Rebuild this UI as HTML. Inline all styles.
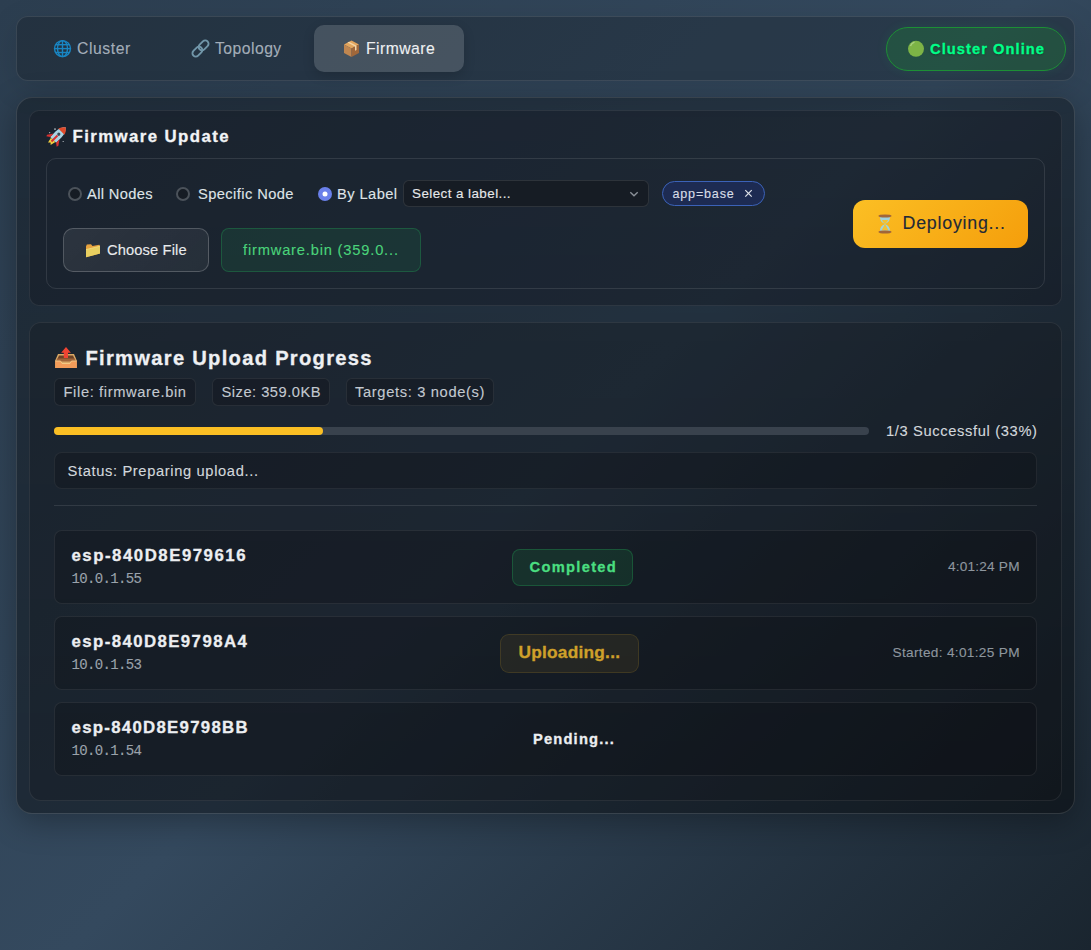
<!DOCTYPE html>
<html><head><meta charset="utf-8"><title>Firmware</title>
<style>
html,body{margin:0;padding:0;}
body{width:1091px;height:950px;position:relative;overflow:hidden;background:linear-gradient(135deg,#2c3e50 0%,#34495e 50%,#1a252f 100%);font-family:"Liberation Sans",sans-serif;}
.t{position:absolute;white-space:pre;}
</style></head><body>
<div style="position:absolute;left:16px;top:16px;width:1059px;height:65px;box-sizing:border-box;border-radius:12px;background:rgba(0,0,0,0.2);border:1px solid rgba(255,255,255,0.1);box-shadow:0 8px 32px rgba(0,0,0,0.1)"></div>
<div style="position:absolute;left:314px;top:25px;width:150px;height:47px;box-sizing:border-box;border-radius:10px;background:rgba(255,255,255,0.15);box-shadow:0 4px 12px rgba(0,0,0,0.15)"></div>
<div style="position:absolute;left:886px;top:27px;width:180px;height:44px;box-sizing:border-box;border-radius:22px;background:rgba(20,180,40,0.2);border:1px solid #1d8f35;box-shadow:0 0 12px rgba(0,255,120,0.08)"></div>
<div style="position:absolute;left:16px;top:97px;width:1059px;height:717px;box-sizing:border-box;border-radius:16px;background:linear-gradient(180deg,rgba(0,0,0,0.3),rgba(0,0,0,0.4));border:1px solid rgba(255,255,255,0.12);box-shadow:0 8px 32px rgba(0,0,0,0.3)"></div>
<div style="position:absolute;left:29px;top:110px;width:1033px;height:196px;box-sizing:border-box;border-radius:10px;background:rgba(15,15,20,0.28);border:1px solid rgba(255,255,255,0.08)"></div>
<div style="position:absolute;left:46px;top:158px;width:999px;height:131px;box-sizing:border-box;border-radius:10px;background:transparent;border:1px solid rgba(255,255,255,0.1)"></div>
<div style="position:absolute;left:403px;top:180px;width:246px;height:27px;box-sizing:border-box;border-radius:6px;background:#161c24;border:1px solid rgba(255,255,255,0.1)"></div>
<div style="position:absolute;left:662px;top:181px;width:103px;height:25px;box-sizing:border-box;border-radius:13px;background:#1d2b52;border:1px solid #3b62b8"></div>
<div style="position:absolute;left:63px;top:228px;width:146px;height:44px;box-sizing:border-box;border-radius:10px;background:linear-gradient(135deg,rgba(255,255,255,0.08),rgba(255,255,255,0.05));border:1px solid rgba(255,255,255,0.2)"></div>
<div style="position:absolute;left:221px;top:228px;width:200px;height:44px;box-sizing:border-box;border-radius:8px;background:rgba(34,197,94,0.1);border:1px solid rgba(34,197,94,0.25)"></div>
<div style="position:absolute;left:853px;top:200px;width:175px;height:48px;box-sizing:border-box;border-radius:12px;background:linear-gradient(135deg,#fbbf24 0%,#f59e0b 100%)"></div>
<div style="position:absolute;left:29px;top:322px;width:1033px;height:479px;box-sizing:border-box;border-radius:12px;background:rgba(15,15,20,0.25);border:1px solid rgba(255,255,255,0.08)"></div>
<div style="position:absolute;left:54px;top:378px;width:142px;height:28px;box-sizing:border-box;border-radius:6px;background:rgba(8,8,10,0.25);border:1px solid rgba(255,255,255,0.08)"></div>
<div style="position:absolute;left:212px;top:378px;width:118px;height:28px;box-sizing:border-box;border-radius:6px;background:rgba(8,8,10,0.25);border:1px solid rgba(255,255,255,0.08)"></div>
<div style="position:absolute;left:346px;top:378px;width:148px;height:28px;box-sizing:border-box;border-radius:6px;background:rgba(8,8,10,0.25);border:1px solid rgba(255,255,255,0.08)"></div>
<div style="position:absolute;left:54px;top:427px;width:815px;height:8px;box-sizing:border-box;border-radius:4px;background:#39424d"></div>
<div style="position:absolute;left:54px;top:427px;width:269px;height:8px;box-sizing:border-box;border-radius:4px;background:#fbbf24"></div>
<div style="position:absolute;left:54px;top:452px;width:983px;height:37px;box-sizing:border-box;border-radius:8px;background:rgba(8,8,10,0.25);border:1px solid rgba(255,255,255,0.07)"></div>
<div style="position:absolute;left:54px;top:505px;width:983px;height:1px;box-sizing:border-box;background:rgba(255,255,255,0.1)"></div>
<div style="position:absolute;left:54px;top:530px;width:983px;height:74px;box-sizing:border-box;border-radius:8px;background:rgba(8,8,10,0.25);border:1px solid rgba(255,255,255,0.08)"></div>
<div style="position:absolute;left:512px;top:549px;width:121px;height:37px;box-sizing:border-box;border-radius:8px;background:rgba(34,197,94,0.12);border:1px solid rgba(34,197,94,0.25)"></div>
<div style="position:absolute;left:54px;top:616px;width:983px;height:74px;box-sizing:border-box;border-radius:8px;background:rgba(8,8,10,0.25);border:1px solid rgba(255,255,255,0.08)"></div>
<div style="position:absolute;left:500px;top:634px;width:139px;height:39px;box-sizing:border-box;border-radius:9px;background:rgba(251,191,36,0.07);border:1px solid rgba(251,191,36,0.13)"></div>
<div style="position:absolute;left:54px;top:702px;width:983px;height:74px;box-sizing:border-box;border-radius:8px;background:rgba(8,8,10,0.25);border:1px solid rgba(255,255,255,0.08)"></div>
<svg style="position:absolute;left:0;top:0" width="1091" height="950" viewBox="0 0 1091 950">
<!-- globe -->
<g transform="translate(62.5,48.6)" fill="none" stroke="#1985c2" stroke-width="1.4">
<circle r="8"/>
<ellipse rx="5" ry="8"/>
<line x1="0" y1="-8" x2="0" y2="8"/>
<line x1="-8" y1="0" x2="8" y2="0"/>
<line x1="-7" y1="-3.9" x2="7" y2="-3.9"/>
<line x1="-7" y1="3.9" x2="7" y2="3.9"/>
</g>
<!-- chain -->
<g transform="translate(200.5,48.5) rotate(-45)" fill="none" stroke="#7196a9" stroke-width="1.9">
<rect x="-10" y="-3.3" width="11.2" height="6.6" rx="3.3"/>
<rect x="-1.2" y="-3.3" width="11.2" height="6.6" rx="3.3"/>
</g>
<!-- package -->
<g>
<polygon points="351.5,40.5 359,44.5 351.5,48.5 344,44.5" fill="#e3a65e"/>
<polygon points="344,44.5 351.5,48.5 351.5,57 344,53" fill="#bf8650"/>
<polygon points="351.5,48.5 359,44.5 359,53 351.5,57" fill="#a0673a"/>
<polygon points="347.5,42.5 349,41.7 356.5,45.7 356.5,50 355,50.8 355,46.5" fill="#f3d6a8"/>
</g>
<!-- green dot -->
<circle cx="916" cy="48.8" r="8" fill="#7db446"/>
<path d="M910.5,46 A6,6 0 0 1 914.5,42.2" stroke="#a8d080" stroke-width="1.3" fill="none"/>
<!-- rocket -->
<g transform="translate(57.5,135.5) rotate(45) scale(1.22)">
<path d="M0,-9.5 C3,-7 3.6,-3 3.4,0 L3.4,5 L-3.4,5 L-3.4,0 C-3.6,-3 -3,-7 0,-9.5Z" fill="#a9d3e3"/>
<path d="M0,-9.5 C2.6,-7.6 3.3,-5.5 3.5,-4.5 L-3.5,-4.5 C-3.3,-5.5 -2.6,-7.6 0,-9.5Z" fill="#e04a2a"/>
<path d="M-3.4,1 L-6.5,5.5 L-6,7 L-3.4,5Z" fill="#d83030"/>
<path d="M3.4,1 L6.5,5.5 L6,7 L3.4,5Z" fill="#d83030"/>
<path d="M-2.5,5 L2.5,5 L1.5,9.5 L0,8 L-1.5,9.5Z" fill="#f2d040"/>
<rect x="-0.8" y="0" width="1.6" height="7" fill="#d83030"/>
<circle cx="0" cy="-1.5" r="1.3" fill="#3d4a55"/>
</g>
<rect x="54" y="128.5" width="2" height="1.2" fill="#cfd4d8" opacity="0.8"/>
<rect x="49" y="132" width="1.2" height="1.2" fill="#cfd4d8" opacity="0.7"/>
<rect x="62.5" y="141" width="1.5" height="1" fill="#cfd4d8" opacity="0.6"/>
<!-- folder -->
<g>
<path d="M86,246.5 L86.8,244.6 L91,244.2 L92.5,246 L99.3,244.8 L100,246 L100,253.5 L86,257.2Z" fill="#e7a23e"/>
<path d="M86,249.6 L100,246.2 L100,253.6 L86,257.3Z" fill="#e8cf60"/>
<path d="M86,249.6 L100,246.2" stroke="#f3de80" stroke-width="0.8"/>
</g>
<!-- hourglass -->
<g>
<path d="M880,217 L890,217 C890,222 886.5,223 885,224 C886.5,225 890,226 890,231 L880,231 C880,226 883.5,225 885,224 C883.5,223 880,222 880,217Z" fill="#9fd3dc"/>
<path d="M882,220 L888,220 C887.5,222 886,223 885,224 C884,223 882.5,222 882,220Z" fill="#f3c234"/>
<path d="M885,224 L888.5,230.5 L881.5,230.5Z" fill="#f3c234"/>
<ellipse cx="885" cy="216" rx="6.6" ry="1.6" fill="#a0663a"/>
<ellipse cx="885" cy="232" rx="6.6" ry="1.6" fill="#a0663a"/>
</g>
<!-- outbox -->
<g>
<path d="M58,354 L74,354 L76.8,360.5 L76.8,368 L55.2,368 L55.2,360.5Z" fill="#d9a866"/>
<path d="M59,355.5 L73,355.5 L75.5,361 L56.5,361Z" fill="#6e4226"/>
<path d="M57,358.5 L75,358.5 L75.5,361.5 L56.5,361.5Z" fill="#a0643a"/>
<path d="M55.2,361 L60.5,361 L62,363.5 L70,363.5 L71.5,361 L76.8,361 L76.8,368 L55.2,368Z" fill="#f29c5a"/>
<path d="M55.5,361 L60.5,361 L62,363.5 L70,363.5 L71.5,361 L76.5,361" stroke="#f5cc88" stroke-width="0.9" fill="none"/>
<path d="M66,347 L70.9,352.7 L68,352.7 L68,358 L63.8,358 L63.8,352.7 L61.1,352.7Z" fill="#f04432"/>
</g>
<!-- radios -->
<circle cx="75" cy="194" r="6" fill="#161c24" stroke="#4b525a" stroke-width="2"/>
<circle cx="183" cy="194" r="6" fill="#161c24" stroke="#4b525a" stroke-width="2"/>
<circle cx="325" cy="194" r="7" fill="#6a80ea"/>
<circle cx="325" cy="194" r="2.5" fill="#ffffff"/>
<!-- chevron -->
<path d="M630.3,192.3 L634,195.8 L637.7,192.3" stroke="#8a9098" stroke-width="1.4" fill="none"/>
<!-- x -->
<path d="M745.3,190.1 L751.7,196.6 M751.7,190.1 L745.3,196.6" stroke="#dfe3ea" stroke-width="1.2" fill="none"/>
</svg>

<div class="t" style="left:77.00px;top:40.67px;font-size:15.75px;line-height:15.75px;font-weight:400;color:#a3adb8;letter-spacing:0.560px;font-family:'Liberation Sans', sans-serif;-webkit-text-stroke:0.12px #a3adb8;">Cluster</div>
<div class="t" style="left:215.00px;top:40.67px;font-size:15.75px;line-height:15.75px;font-weight:400;color:#a3adb8;letter-spacing:0.455px;font-family:'Liberation Sans', sans-serif;-webkit-text-stroke:0.12px #a3adb8;">Topology</div>
<div class="t" style="left:366.00px;top:40.67px;font-size:15.75px;line-height:15.75px;font-weight:400;color:#eef0f2;letter-spacing:0.446px;font-family:'Liberation Sans', sans-serif;-webkit-text-stroke:0.12px #eef0f2;">Firmware</div>
<div class="t" style="left:930.00px;top:41.56px;font-size:14.70px;line-height:14.70px;font-weight:700;color:#00ff88;letter-spacing:1.047px;font-family:'Liberation Sans', sans-serif;-webkit-text-stroke:0.3px #00ff88;text-shadow:0 1px 2px rgba(0,0,0,0.35)">Cluster Online</div>
<div class="t" style="left:72.50px;top:128.58px;font-size:16.80px;line-height:16.80px;font-weight:700;color:#f2f4f6;letter-spacing:1.422px;font-family:'Liberation Sans', sans-serif;-webkit-text-stroke:0.3px #f2f4f6;">Firmware Update</div>
<div class="t" style="left:87.00px;top:186.56px;font-size:14.70px;line-height:14.70px;font-weight:400;color:#dfe3e7;letter-spacing:0.348px;font-family:'Liberation Sans', sans-serif;-webkit-text-stroke:0.12px #dfe3e7;">All Nodes</div>
<div class="t" style="left:198.00px;top:186.56px;font-size:14.70px;line-height:14.70px;font-weight:400;color:#dfe3e7;letter-spacing:0.405px;font-family:'Liberation Sans', sans-serif;-webkit-text-stroke:0.12px #dfe3e7;">Specific Node</div>
<div class="t" style="left:337.00px;top:186.56px;font-size:14.70px;line-height:14.70px;font-weight:400;color:#dfe3e7;letter-spacing:0.420px;font-family:'Liberation Sans', sans-serif;-webkit-text-stroke:0.12px #dfe3e7;">By Label</div>
<div class="t" style="left:412.00px;top:186.62px;font-size:13.44px;line-height:13.44px;font-weight:400;color:#e6e8ea;letter-spacing:0.420px;font-family:'Liberation Sans', sans-serif;-webkit-text-stroke:0.12px #e6e8ea;">Select a label...</div>
<div class="t" style="left:672.50px;top:187.93px;font-size:12.60px;line-height:12.60px;font-weight:400;color:#d8dde6;letter-spacing:0.795px;font-family:'Liberation Sans', sans-serif;-webkit-text-stroke:0.12px #d8dde6;">app=base</div>
<div class="t" style="left:107.00px;top:242.56px;font-size:14.70px;line-height:14.70px;font-weight:400;color:#e8eaec;letter-spacing:0.120px;font-family:'Liberation Sans', sans-serif;-webkit-text-stroke:0.12px #e8eaec;">Choose File</div>
<div class="t" style="left:243.00px;top:242.56px;font-size:14.70px;line-height:14.70px;font-weight:400;color:#4ad37a;letter-spacing:0.811px;font-family:'Liberation Sans', sans-serif;-webkit-text-stroke:0.12px #4ad37a;">firmware.bin (359.0...</div>
<div class="t" style="left:902.50px;top:214.89px;font-size:17.85px;line-height:17.85px;font-weight:400;color:#1f2a37;letter-spacing:0.751px;font-family:'Liberation Sans', sans-serif;-webkit-text-stroke:0.12px #1f2a37;">Deploying...</div>
<div class="t" style="left:85.50px;top:347.93px;font-size:20.16px;line-height:20.16px;font-weight:700;color:#eef0f3;letter-spacing:1.282px;font-family:'Liberation Sans', sans-serif;-webkit-text-stroke:0.3px #eef0f3;">Firmware Upload Progress</div>
<div class="t" style="left:63.50px;top:384.56px;font-size:14.70px;line-height:14.70px;font-weight:400;color:#c3c9d0;letter-spacing:0.628px;font-family:'Liberation Sans', sans-serif;-webkit-text-stroke:0.12px #c3c9d0;">File: firmware.bin</div>
<div class="t" style="left:221.50px;top:384.56px;font-size:14.70px;line-height:14.70px;font-weight:400;color:#c3c9d0;letter-spacing:0.492px;font-family:'Liberation Sans', sans-serif;-webkit-text-stroke:0.12px #c3c9d0;">Size: 359.0KB</div>
<div class="t" style="left:355.00px;top:384.56px;font-size:14.70px;line-height:14.70px;font-weight:400;color:#c3c9d0;letter-spacing:0.654px;font-family:'Liberation Sans', sans-serif;-webkit-text-stroke:0.12px #c3c9d0;">Targets: 3 node(s)</div>
<div class="t" style="left:886.00px;top:423.56px;font-size:14.70px;line-height:14.70px;font-weight:400;color:#d2d7dc;letter-spacing:0.643px;font-family:'Liberation Sans', sans-serif;-webkit-text-stroke:0.12px #d2d7dc;">1/3 Successful (33%)</div>
<div class="t" style="left:67.50px;top:463.56px;font-size:14.70px;line-height:14.70px;font-weight:400;color:#d2d7dc;letter-spacing:0.638px;font-family:'Liberation Sans', sans-serif;-webkit-text-stroke:0.12px #d2d7dc;">Status: Preparing upload...</div>
<div class="t" style="left:71.50px;top:547.98px;font-size:16.80px;line-height:16.80px;font-weight:700;color:#eceef1;letter-spacing:1.524px;font-family:'Liberation Sans', sans-serif;-webkit-text-stroke:0.3px #eceef1;">esp-840D8E979616</div>
<div class="t" style="left:71.50px;top:572.24px;font-size:14.04px;line-height:14.04px;font-weight:400;color:#9aa2ab;letter-spacing:-0.666px;font-family:'Liberation Mono', monospace;-webkit-text-stroke:0.12px #9aa2ab;">10.0.1.55</div>
<div class="t" style="left:529.50px;top:559.56px;font-size:14.70px;line-height:14.70px;font-weight:700;color:#4ade80;letter-spacing:1.301px;font-family:'Liberation Sans', sans-serif;-webkit-text-stroke:0.3px #4ade80;">Completed</div>
<div class="t" style="left:948.00px;top:559.75px;font-size:13.65px;line-height:13.65px;font-weight:400;color:#8e969e;letter-spacing:0.193px;font-family:'Liberation Sans', sans-serif;-webkit-text-stroke:0.12px #8e969e;">4:01:24 PM</div>
<div class="t" style="left:71.50px;top:633.98px;font-size:16.80px;line-height:16.80px;font-weight:700;color:#eceef1;letter-spacing:1.422px;font-family:'Liberation Sans', sans-serif;-webkit-text-stroke:0.3px #eceef1;">esp-840D8E9798A4</div>
<div class="t" style="left:71.50px;top:658.24px;font-size:14.04px;line-height:14.04px;font-weight:400;color:#9aa2ab;letter-spacing:-0.666px;font-family:'Liberation Mono', monospace;-webkit-text-stroke:0.12px #9aa2ab;">10.0.1.53</div>
<div class="t" style="left:518.50px;top:643.53px;font-size:17.32px;line-height:17.32px;font-weight:700;color:#cfa02a;letter-spacing:0.222px;font-family:'Liberation Sans', sans-serif;-webkit-text-stroke:0.3px #cfa02a;">Uploading...</div>
<div class="t" style="left:892.60px;top:645.75px;font-size:13.65px;line-height:13.65px;font-weight:400;color:#8e969e;letter-spacing:0.310px;font-family:'Liberation Sans', sans-serif;-webkit-text-stroke:0.12px #8e969e;">Started: 4:01:25 PM</div>
<div class="t" style="left:71.50px;top:719.98px;font-size:16.80px;line-height:16.80px;font-weight:700;color:#eceef1;letter-spacing:1.295px;font-family:'Liberation Sans', sans-serif;-webkit-text-stroke:0.3px #eceef1;">esp-840D8E9798BB</div>
<div class="t" style="left:71.50px;top:744.24px;font-size:14.04px;line-height:14.04px;font-weight:400;color:#9aa2ab;letter-spacing:-0.666px;font-family:'Liberation Mono', monospace;-webkit-text-stroke:0.12px #9aa2ab;">10.0.1.54</div>
<div class="t" style="left:533.00px;top:731.76px;font-size:14.70px;line-height:14.70px;font-weight:700;color:#eceef1;letter-spacing:1.179px;font-family:'Liberation Sans', sans-serif;-webkit-text-stroke:0.3px #eceef1;">Pending...</div>
</body></html>
